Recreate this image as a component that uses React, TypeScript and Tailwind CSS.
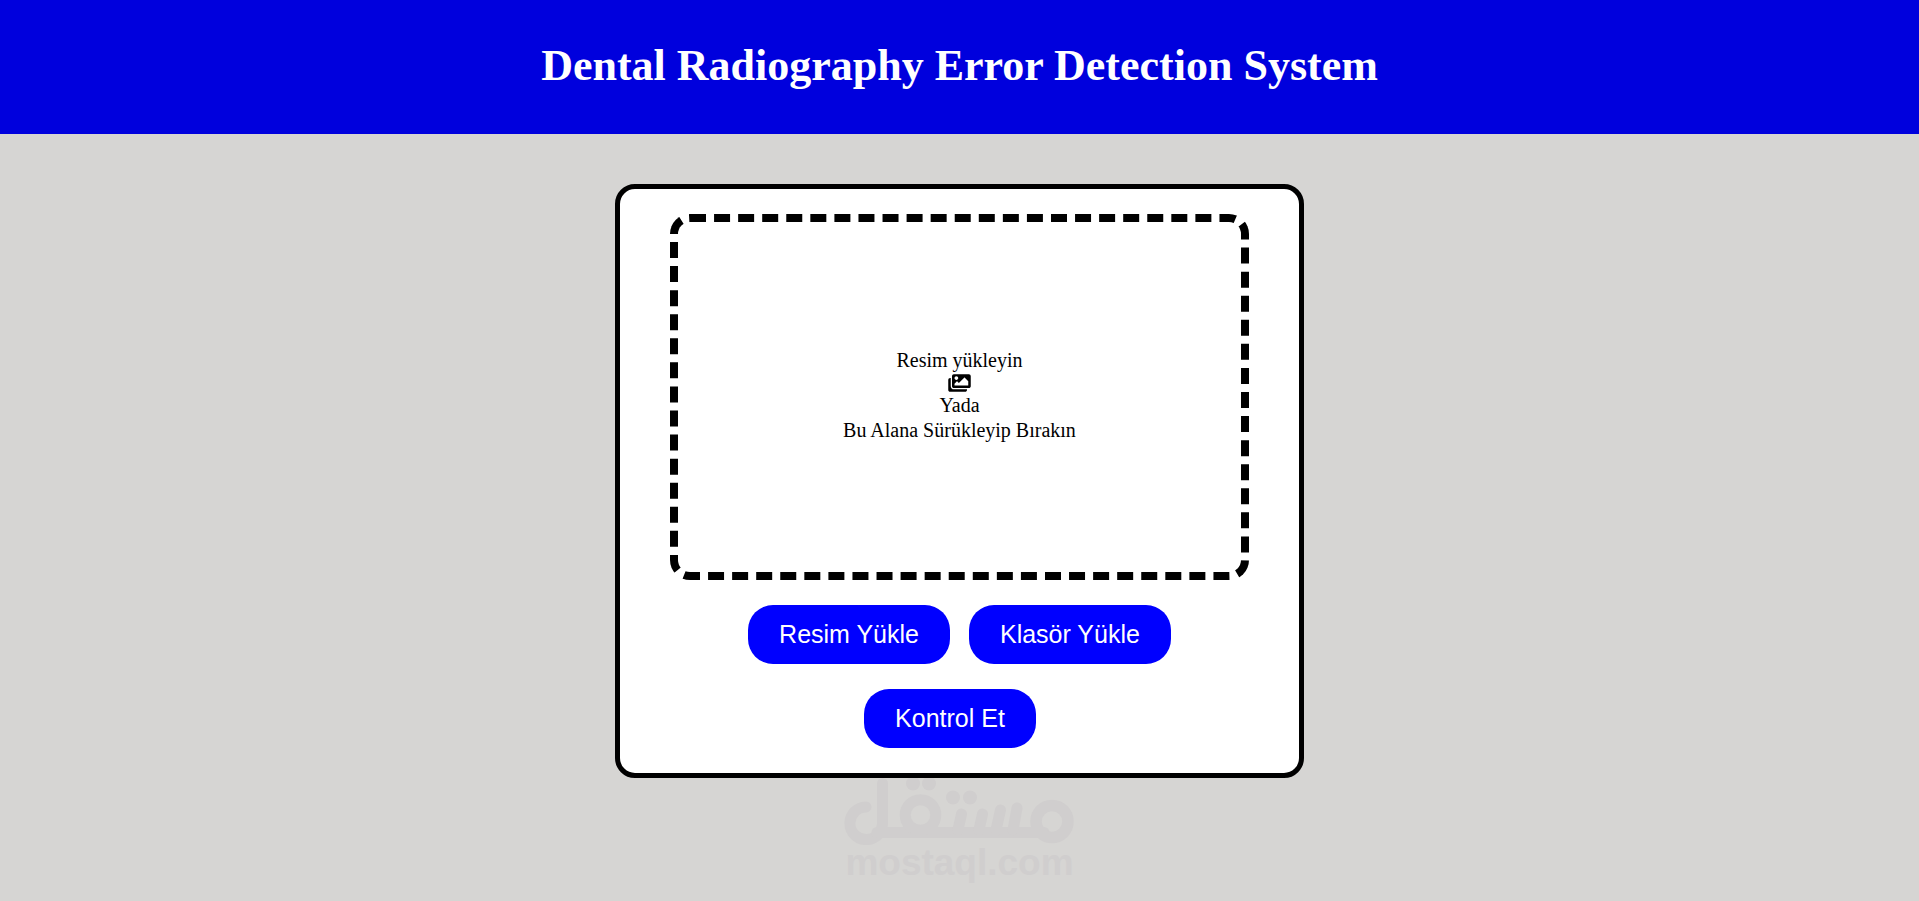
import { FaImages } from "react-icons/fa";
import type { ReactNode } from "react";

function PillButton({ children }: { children: ReactNode }) {
  return (
    <button
      type="button"
      className="cursor-pointer rounded-[25px] bg-[#0000ff] px-[31px] py-[15px] font-['Liberation_Sans',Arial,sans-serif] text-[25px] leading-[29px] text-white"
    >
      {children}
    </button>
  );
}

function Watermark() {
  return (
    <div className="flex flex-col items-center text-[#d0cece]">
      <svg width="232" height="67" viewBox="0 0 232 67" fill="none" stroke="currentColor" aria-hidden="true">
        <g strokeWidth="11" strokeLinecap="round">
          <path d="M22 29A16.300 16.300 0 1 0 38.500 45V5.500" />
          <path d="M33 54.500H200" />
          <path d="M117.500 36 114 52M138.500 36 135 52M156.500 32 152 52M173 30 169 52" />
        </g>
        <circle cx="76.500" cy="37" r="15.300" strokeWidth="11" />
        <circle cx="208" cy="43.500" r="16" strokeWidth="11.500" />
        <g fill="currentColor" stroke="none">
          <circle cx="69" cy="5.500" r="7" />
          <circle cx="85" cy="5.500" r="7" />
          <circle cx="109" cy="19.500" r="7" />
          <circle cx="126" cy="19.500" r="7" />
        </g>
      </svg>
      <span className="font-['Liberation_Sans',Arial,sans-serif] text-[37px] leading-[36px] font-bold">mostaql.com</span>
    </div>
  );
}

export default function App() {
  return (
    <div className="flex min-h-screen flex-col bg-[#d6d5d3] font-['Liberation_Serif','Times_New_Roman',serif] text-black">
      <header className="bg-[#0000dd] px-5 pt-[39px] pb-[41px] text-center">
        <h1 className="text-[44px] leading-[54px] font-bold text-white">Dental Radiography Error Detection System</h1>
      </header>
      <main className="flex flex-col items-center pt-[50px]">
        <section className="flex w-full max-w-[689px] flex-col gap-[25px] rounded-[20px] border-5 border-black bg-white px-[50px] py-[25px]">
          <div className="flex min-h-[366px] flex-col items-center justify-center rounded-[20px] border-8 border-dashed border-black pb-1 text-center text-[20px] leading-[25px]">
            <p>Resim yükleyin</p>
            <FaImages className="h-5 w-[23px]" aria-hidden="true" />
            <p>Yada</p>
            <p>Bu Alana Sürükleyip Bırakın</p>
          </div>
          <div className="flex flex-wrap justify-center gap-[19px]">
            <PillButton>Resim Yükle</PillButton>
            <PillButton>Klasör Yükle</PillButton>
          </div>
          <div className="flex justify-center pr-[19px]">
            <PillButton>Kontrol Et</PillButton>
          </div>
        </section>
        <Watermark />
      </main>
    </div>
  );
}
